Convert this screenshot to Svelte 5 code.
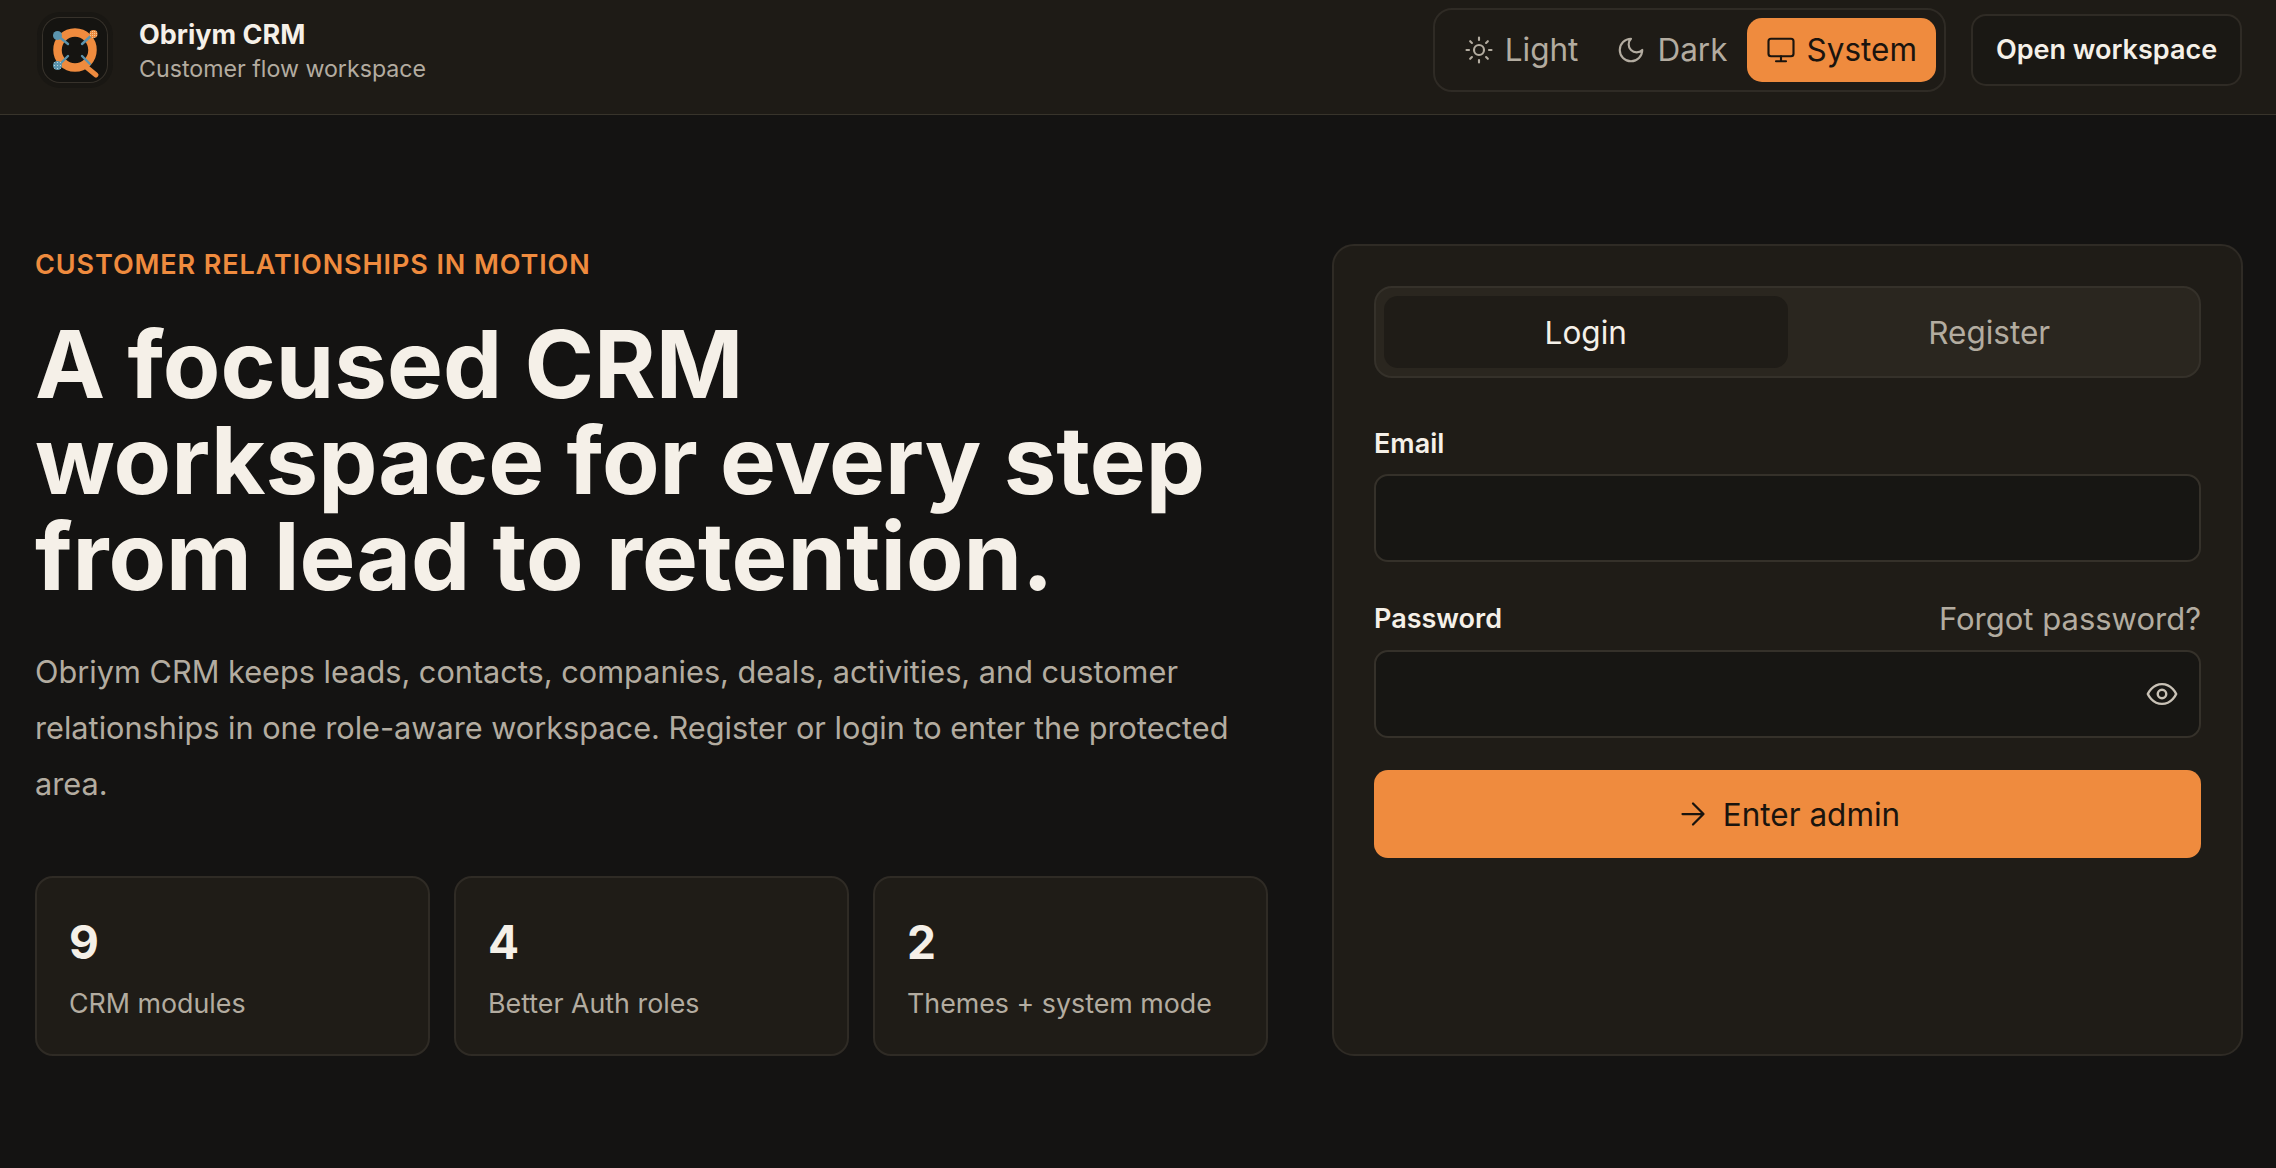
<script>
  const stats = [
    { value: '9', label: 'CRM modules' },
    { value: '4', label: 'Better Auth roles' },
    { value: '2', label: 'Themes + system mode' }
  ];
</script>

<div class="page">
  <header class="topbar">
    <div class="brand">
      <div class="logo">
        <svg width="66" height="66" viewBox="0 0 66 66" fill="none">
          <defs>
            <pattern id="dither-orange" width="2" height="2" patternUnits="userSpaceOnUse">
              <rect width="2" height="2" fill="#ef8b3e" />
              <rect width="1" height="1" fill="#f6c793" />
            </pattern>
            <pattern id="dither-blue" width="3" height="3" patternUnits="userSpaceOnUse">
              <rect width="3" height="3" fill="#5b94ae" />
              <rect width="1" height="1" fill="#b9d3df" />
            </pattern>
          </defs>
          <circle cx="33" cy="33" r="17.5" stroke="#ef8b3e" stroke-width="8.5" />
          <path d="M43 49 L54 58" stroke="#ef8b3e" stroke-width="5" stroke-linecap="round" />
          <g stroke="#5b94ae" stroke-width="2.4" stroke-linecap="round">
            <path d="M16 19 L26 27" />
            <path d="M51 17 L40 27" />
            <path d="M16 49 L26 39" />
            <path d="M40 39 L48 47" />
          </g>
          <circle cx="15.5" cy="18.5" r="4.5" fill="#5b94ae" />
          <circle cx="51.5" cy="17" r="4" fill="url(#dither-orange)" />
          <circle cx="15.5" cy="48.5" r="4.5" fill="url(#dither-blue)" />
        </svg>
      </div>
      <div class="brand-text">
        <div class="brand-name">Obriym CRM</div>
        <div class="brand-sub">Customer flow workspace</div>
      </div>
    </div>
    <div class="actions">
      <div class="theme">
        <button class="theme-btn">
          <svg class="icon" viewBox="0 0 24 24"><circle cx="12" cy="12" r="4" /><path d="M12 2v2M12 20v2M4.93 4.93l1.41 1.41M17.66 17.66l1.41 1.41M2 12h2M20 12h2M6.34 17.66l-1.41 1.41M19.07 4.93l-1.41 1.41" /></svg>
          Light
        </button>
        <button class="theme-btn">
          <svg class="icon" viewBox="0 0 24 24"><path d="M12 3a6 6 0 0 0 9 9 9 9 0 1 1-9-9Z" /></svg>
          Dark
        </button>
        <button class="theme-btn active">
          <svg class="icon" viewBox="0 0 24 24"><rect width="20" height="14" x="2" y="3" rx="2" /><path d="M8 21h8M12 17v4" /></svg>
          System
        </button>
      </div>
      <button class="open">Open workspace</button>
    </div>
  </header>

  <main class="main">
    <section class="hero">
      <div class="eyebrow">CUSTOMER RELATIONSHIPS IN MOTION</div>
      <h1>A focused CRM<br />workspace for every step<br />from lead to retention.</h1>
      <p class="lead">Obriym CRM keeps leads, contacts, companies, deals, activities, and customer relationships in one role-aware workspace. Register or login to enter the protected area.</p>
      <div class="stats">
        {#each stats as s}
          <div class="stat">
            <div class="stat-value">{s.value}</div>
            <div class="stat-label">{s.label}</div>
          </div>
        {/each}
      </div>
    </section>

    <section class="card">
      <div class="tabs">
        <div class="tab on">Login</div>
        <div class="tab">Register</div>
      </div>
      <div class="field email">
        <div class="label-row"><span class="label">Email</span></div>
        <div class="input"></div>
      </div>
      <div class="field">
        <div class="label-row"><span class="label">Password</span><span class="forgot">Forgot password?</span></div>
        <div class="input with-eye">
          <svg class="icon eye" viewBox="0 0 24 24"><path d="M2 12s3-7 10-7 10 7 10 7-3 7-10 7-10-7-10-7Z" /><circle cx="12" cy="12" r="3" /></svg>
        </div>
      </div>
      <button class="submit">
        <svg class="icon arrow" viewBox="0 0 24 24"><path d="M5 12h14M12 5l7 7-7 7" /></svg>
        Enter admin
      </button>
    </section>
  </main>
</div>

<style>
  :global(body) { margin: 0; background: #141312; }
  .page { min-height: 1168px; background: #141312; font-family: Inter, "Liberation Sans", sans-serif; color: #f5f0e8; }
  button { font-family: inherit; }
  .topbar { height: 115px; box-sizing: border-box; display: flex; align-items: center; justify-content: space-between; padding: 0 34px 15px 42px; background: #1e1b16; border-bottom: 1px solid #38342b; }
  .brand { display: flex; align-items: center; gap: 31px; }
  .logo { width: 66px; height: 66px; box-sizing: border-box; border-radius: 18px; background: #151411; box-shadow: 0 0 0 1px #37322b inset, 0 0 0 5px #191713; display: flex; align-items: center; justify-content: center; }
  .brand-text { padding-top: 3px; }
  .brand-name { font-size: 27px; font-weight: 700; line-height: 36px; }
  .brand-sub { font-size: 23.2px; line-height: 32px; color: #b3aca0; }
  .actions { display: flex; align-items: center; gap: 25px; }
  .theme { display: flex; align-items: center; height: 84px; box-sizing: border-box; padding: 0 8px 0 10px; border: 2px solid #2f2b25; border-radius: 19px; }
  .theme-btn { display: flex; align-items: center; gap: 11px; height: 64px; border: 0; background: none; color: #b3aca0; font-size: 31.5px; padding: 0 19px; border-radius: 15px; }
  .theme-btn.active { background: #ef8b3e; color: #1a140e; }
  .icon { width: 30px; height: 30px; fill: none; stroke: currentColor; stroke-width: 1.7; stroke-linecap: round; stroke-linejoin: round; flex: none; }
  .open { height: 72px; width: 271px; border: 2px solid #2f2b25; border-radius: 15px; background: #1a1814; color: #f5f0e8; font-size: 27px; font-weight: 600; }
  .main { display: grid; grid-template-columns: 1233px 911px; gap: 64px; padding: 129px 33px 0 35px; }
  .hero { display: flex; flex-direction: column; }
  .eyebrow { color: #ef8b3e; font-size: 27px; letter-spacing: 0.9px; font-weight: 600; line-height: 40px; margin-top: 1px; }
  h1 { margin: 31px 0 0; font-size: 94px; line-height: 96px; font-weight: 650; color: #f5f0e8; }
  .lead { margin: 40px 0 0; font-size: 30.7px; line-height: 56px; color: #b3aca0; }
  .stats { margin-top: auto; display: grid; grid-template-columns: repeat(3, 1fr); gap: 24px; }
  .stat { height: 180px; box-sizing: border-box; padding: 37px 32px 0; background: #1f1c17; border: 2px solid #2f2b25; border-radius: 18px; }
  .stat-value { font-size: 46px; font-weight: 700; line-height: 54px; }
  .stat-label { margin-top: 16px; font-size: 26.8px; line-height: 36px; color: #b3aca0; }
  .card { height: 812px; box-sizing: border-box; padding: 40px; background: #1f1c17; border: 2px solid #2f2b25; border-radius: 22px; }
  .tabs { height: 92px; box-sizing: border-box; display: grid; grid-template-columns: 1fr 1fr; padding: 8px; background: #2a261f; border: 2px solid #35312a; border-radius: 18px; }
  .tab { display: flex; align-items: center; justify-content: center; border-radius: 14px; font-size: 31.5px; color: #b3aca0; }
  .tab.on { background: #1f1c17; color: #f5f0e8; }
  .field { display: flex; flex-direction: column; }
  .email { margin-top: 40px; }
  .field + .field { margin-top: 31px; }
  .label-row { display: flex; justify-content: space-between; align-items: center; height: 50px; margin-bottom: 6px; }
  .field + .field .label-row { margin-bottom: 7px; }
  .label { font-size: 27px; font-weight: 600; color: #f5f0e8; }
  .forgot { font-size: 31px; color: #b3aca0; }
  .input { height: 88px; box-sizing: border-box; background: #171613; border: 2px solid #35312a; border-radius: 14px; display: flex; align-items: center; justify-content: flex-end; padding-right: 20px; }
  .eye { width: 34px; height: 34px; color: #c9c2b6; stroke-width: 1.7; }
  .submit { margin-top: 32px; width: 100%; height: 88px; display: flex; align-items: center; justify-content: center; gap: 12px; background: #ef8b3e; color: #1a140e; border: 0; border-radius: 14px; font-size: 31.5px; }
  .arrow { width: 36px; height: 36px; stroke-width: 1.5; }
</style>
